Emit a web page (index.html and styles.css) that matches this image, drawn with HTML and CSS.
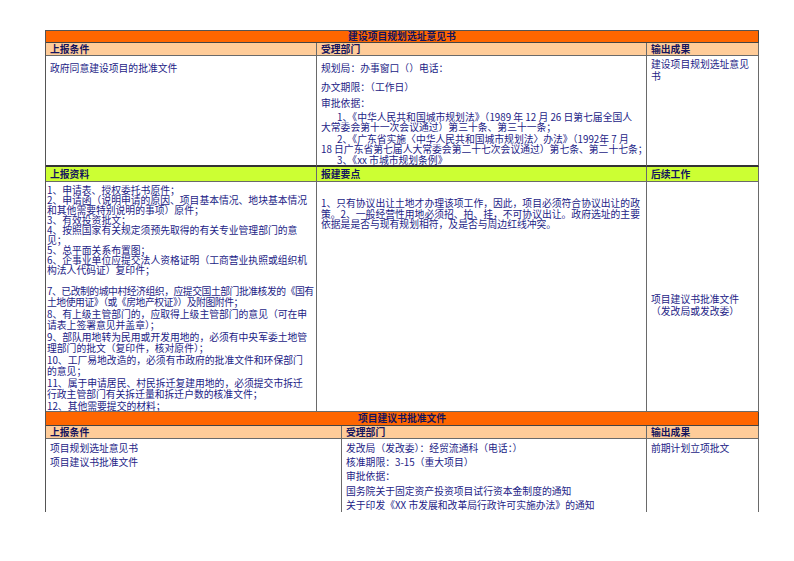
FILE: index.html
```html
<!DOCTYPE html>
<html lang="zh-CN">
<head>
<meta charset="utf-8">
<title>建设项目规划选址意见书</title>
<link rel="stylesheet" href="styles.css">
</head>
<body>
<div class="page">
  <section class="sheet sheet-a">
    <div class="cell title span3">建设项目规划选址意见书</div>
    <div class="cell head peach">上报条件</div>
    <div class="cell head peach">受理部门</div>
    <div class="cell head peach">输出成果</div>

    <div class="cell r1 r1-c1">政府同意建设项目的批准文件</div>
    <div class="cell r1 r1-c2">
      <p class="ln l1">规划局：办事窗口（）电话：</p>
      <p class="ln l2">办文期限：（工作日）</p>
      <p class="ln l3">审批依据：</p>
      <p class="ln l4 indent">1、《中华人民共和国城市规划法》（1989 年 12 月 26 日第七届全国人</p>
      <p class="ln">大常委会第十一次会议通过）第三十条、第三十一条；</p>
      <p class="ln l6 indent">2、《广东省实施〈中华人民共和国城市规划法〉办法》（1992年 7 月</p>
      <p class="ln">18 日广东省第七届人大常委会第二十七次会议通过）第七条、第二十七条；</p>
      <p class="ln l8 indent">3、《xx 市城市规划条例》</p>
    </div>
    <div class="cell r1 r1-c3">建设项目规划选址意见书</div>

    <div class="cell head green">上报资料</div>
    <div class="cell head green">报建要点</div>
    <div class="cell head green">后续工作</div>

    <div class="cell r2-c1">
      <div class="list-a">
        <p>1、申请表、授权委托书原件；</p>
        <p>2、申请函（说明申请的原因、项目基本情况、地块基本情况<br>和其他需要特别说明的事项）原件；</p>
        <p>3、有效投资批文；</p>
        <p>4、按照国家有关规定须预先取得的有关专业管理部门的意<br>见；</p>
        <p>5、总平面关系布置图；</p>
        <p>6、企事业单位应提交法人资格证明（工商营业执照或组织机<br>构法人代码证）复印件；</p>
      </div>
      <div class="list-b">
        <p class="tight">7、已改制的城中村经济组织，应提交国土部门批准核发的《国有<br>土地使用证》（或《房地产权证》）及附图附件；</p>
        <p>8、有上级主管部门的，应取得上级主管部门的意见（可在申<br>请表上签署意见并盖章）；</p>
        <p>9、部队用地转为民用或开发用地的，必须有中央军委土地管<br>理部门的批文（复印件，核对原件）；</p>
        <p>10、工厂易地改造的，必须有市政府的批准文件和环保部门<br>的意见；</p>
        <p>11、属于申请居民、村民拆迁复建用地的，必须提交市拆迁<br>行政主管部门有关拆迁量和拆迁户数的核准文件；</p>
        <p>12、其他需要提交的材料；</p>
      </div>
    </div>
    <div class="cell r2-c2">1、只有协议出让土地才办理该项工作，因此，项目必须符合协议出让的政<br>策。2、一般经营性用地必须招、拍、挂，不可协议出让。政府选址的主要<br>依据是是否与现有规划相符，及是否与周边红线冲突。</div>
    <div class="cell r2-c3">项目建议书批准文件<br>（发改局或发改委）</div>
  </section>

  <section class="sheet sheet-b">
    <div class="cell title title-b span3">项目建议书批准文件</div>
    <div class="cell head peach">上报条件</div>
    <div class="cell head peach">受理部门</div>
    <div class="cell head peach">输出成果</div>

    <div class="cell last">项目规划选址意见书<br>项目建议书批准文件</div>
    <div class="cell last">发改局（发改委）：经贸流通科（电话：）<br>核准期限：3-15（重大项目）<br>审批依据：<br>国务院关于固定资产投资项目试行资本金制度的通知<br>关于印发《XX 市发展和改革局行政许可实施办法》的通知</div>
    <div class="cell last">前期计划立项批文</div>
  </section>
</div>
</body>
</html>
```

FILE: styles.css
```css
html, body {
  margin: 0;
  padding: 0;
  background: #ffffff;
}

body {
  font-family: "Noto Sans CJK SC", "Liberation Sans", sans-serif;
  font-size: 9.8px;
  color: #1c1c86;
}

p {
  margin: 0;
}

.page {
  padding: 30px 0 0 45px;
}

.sheet {
  display: grid;
  width: 714px;
  box-sizing: border-box;
  border-left: 1px solid #555555;
}

.sheet-a {
  border-top: 1px solid #555555;
  grid-template-columns: 271px 330px 112px;
  grid-template-rows: 12px 13px 111px 15px 230px;
}

.sheet-b {
  grid-template-columns: 296px 305px 112px;
  grid-template-rows: 14px 13px 73px;
}

.cell {
  box-sizing: border-box;
  border-right: 1px solid #6a6a6a;
  border-bottom: 1px solid #6a6a6a;
  overflow: hidden;
  padding: 0 0 0 4px;
  white-space: nowrap;
  line-height: 10px;
}

.span3 {
  grid-column: 1 / span 3;
}

.title {
  background: #ff6600;
  border-bottom-color: #444444;
  border-right-color: #444444;
  text-align: center;
  font-weight: bold;
  color: #14145e;
  line-height: 11px;
  padding: 0;
  overflow: visible;
}

.title-b {
  line-height: 13px;
}

.head {
  font-weight: bold;
  color: #14145e;
  line-height: 13px;
}

.peach {
  background: #ffcc99;
}

.green {
  background: #ccff33;
  line-height: 14px;
}

.r1 {
  border-bottom: 2px solid #333333;
}

.r1-c1 {
  padding-top: 7px;
}

.r1-c2 {
  padding-top: 7px;
}

.r1-c2 .l2 { margin-top: 9px; }
.r1-c2 .l3 { margin-top: 6px; }
.r1-c2 .l4 { margin-top: 4px; }
.r1-c2 .l6 { margin-top: 2px; }
.r1-c2 .l8 { margin-top: 1px; }

.indent {
  padding-left: 16px;
}

.r1-c3 {
  white-space: normal;
  line-height: 11.5px;
  padding-top: 3px;
}

.r2-c1 {
  padding: 3px 0 0 1px;
}

.list-a {
  line-height: 10px;
}

.list-b {
  margin-top: 10.5px;
  line-height: 11.5px;
}

.tight {
  letter-spacing: -0.45px;
}

.r2-c2 {
  padding-top: 16px;
  line-height: 10.5px;
}

.r2-c3 {
  padding-top: 111px;
  line-height: 12px;
}

.last {
  border-bottom: none;
  line-height: 14.2px;
  padding-top: 2px;
}
```
